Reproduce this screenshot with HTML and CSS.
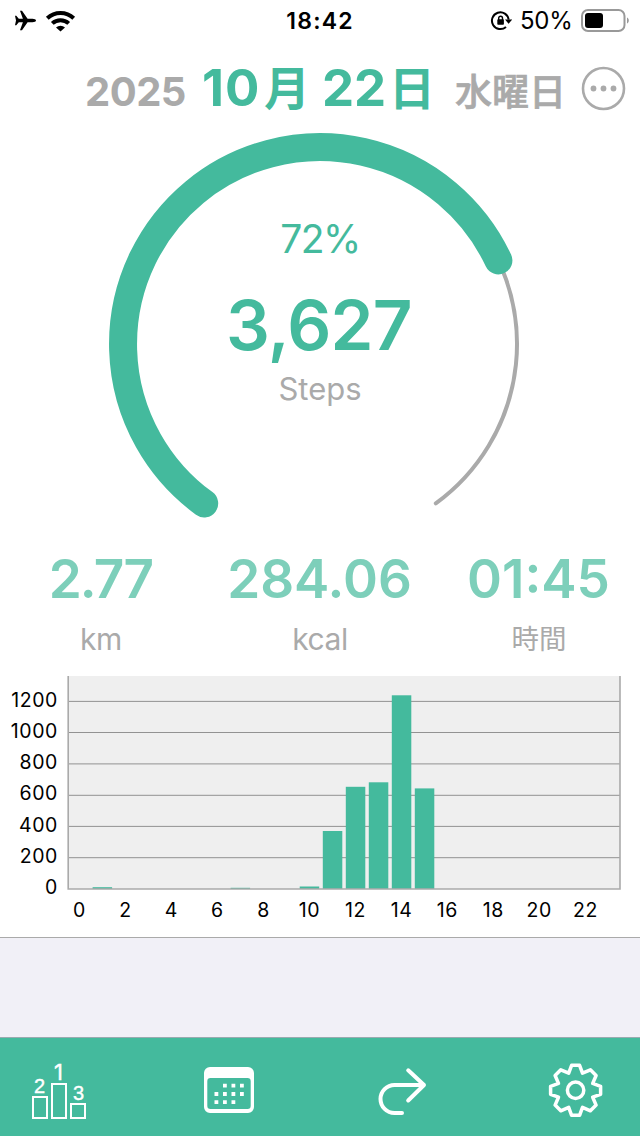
FILE: index.html
```html
<!DOCTYPE html>
<html lang="ja">
<head>
<meta charset="utf-8">
<title>Steps</title>
<link rel="stylesheet" href="styles.css">
</head>
<body>
<div class="app">
  <header class="status">
    <div class="status-left">
      <svg class="plane" viewBox="14 10 23 21" width="23" height="21"><path d="M36 20.500c0-1-1.600-1.700-3.500-1.700h-4.900l-5.600-8h-2l2.900 8h-4.100l-2.500-3H15l1 4.700-1 4.700h1.300l2.500-3h4.100l-2.900 8h2l5.600-8h4.900c1.900 0 3.500-.7 3.500-1.700z"/></svg>
      <svg class="wifi" viewBox="45 8 31 24" width="31" height="24"><path d="M60.500 30.500l-4.500-4a6.500 6.500 0 0 1 9 0z"/><path class="wifi-arc" d="M52.300 22.400a12 12 0 0 1 16.400 0M47.300 17.200a19.200 19.200 0 0 1 26.400 0"/></svg>
    </div>
    <div class="clock">18:42</div>
    <div class="status-right">
      <svg class="lock" viewBox="490 10 22 21" width="22" height="21"><path class="lock-ring" d="M506 26.900a8.400 8.400 0 1 1 2.700-7.200"/><path d="M505 19.500h7.200l-3.600 4.300z"/><rect x="497.300" y="19.300" width="6.600" height="5.500" rx=".8"/><path class="lock-bow" d="M498.700 20v-1.800a1.900 1.900 0 0 1 3.800 0V20"/></svg>
      <span class="percent">50%</span>
      <svg class="battery" viewBox="580 7 50 25" width="50" height="25"><rect class="case" x="582" y="9" width="42.500" height="21" rx="6"/><rect x="585" y="12" width="18" height="15" rx="3"/><path class="tip" d="M627 16.500c2.400.8 2.400 5.200 0 6z"/></svg>
    </div>
  </header>

  <div class="date">
    <span class="year">2025</span>
    <span class="day"><span class="num m">10</span><span class="kanji m-k">月</span><span class="num d">22</span><span class="kanji">日</span></span>
    <span class="weekday">水曜日</span>
    <svg class="more" viewBox="581 66 46 46" width="46" height="46"><circle class="more-ring" cx="603.500" cy="88.500" r="20.500"/><circle cx="593.500" cy="88.500" r="2.900"/><circle cx="603.500" cy="88.500" r="2.900"/><circle cx="613.500" cy="88.500" r="2.900"/></svg>
  </div>

  <section class="gauge">
    <svg class="ring" viewBox="100 120 440 410" width="440" height="410">
      <path class="ring-track" d="M204.200 503.400A197 197 0 1 1 435.800 503.400"/>
      <path class="ring-value" d="M204.200 503.400A197 197 0 1 1 498.400 260.400"/>
    </svg>
    <div class="gauge-text">
      <div class="goal">72%</div>
      <div class="steps">3,627</div>
      <div class="unit">Steps</div>
    </div>
  </section>

  <section class="stats">
    <div class="stat km"><b>2.77</b><span>km</span></div>
    <div class="stat kcal"><b>284.06</b><span>kcal</span></div>
    <div class="stat time"><b>01:45</b><span class="jp">時間</span></div>
  </section>

  <svg class="chart" viewBox="0 670 640 267" width="640" height="267">
    <rect class="plot" x="68" y="676" width="552" height="213"/>
    <path class="grid" d="M68 701.400H620M68 732.500H620M68 763.900H620M68 795.300H620M68 826.400H620M68 857.700H620"/>
    <g class="bars">
      <rect x="92.600" y="887.200" width="19.500" height="1.800"/><rect x="230.600" y="887.800" width="19.500" height="1.200"/><rect x="299.700" y="886.500" width="19.500" height="2.500"/>
      <rect x="322.800" y="831" width="19.500" height="58"/><rect x="345.800" y="786.800" width="19.500" height="102.200"/><rect x="368.800" y="782.300" width="19.500" height="106.700"/>
      <rect x="391.800" y="695.300" width="19.500" height="193.700"/><rect x="414.800" y="788.400" width="19.500" height="100.600"/>
    </g>
    <path class="frame" d="M68.200 676V889H620V676"/>
    <g class="ylab"><text x="58" y="707">1200</text><text x="58" y="738.200">1000</text><text x="58" y="769.300">800</text><text x="58" y="800.400">600</text><text x="58" y="832">400</text><text x="58" y="863">200</text><text x="58" y="894">0</text></g>
    <g class="xlab"><text x="79.500" y="917">0</text><text x="125.500" y="917">2</text><text x="171.300" y="917">4</text><text x="217.400" y="917">6</text><text x="263.500" y="917">8</text><text x="309.500" y="917">10</text><text x="355.500" y="917">12</text><text x="401.500" y="917">14</text><text x="447.300" y="917">16</text><text x="493.300" y="917">18</text><text x="539.300" y="917">20</text><text x="585.500" y="917">22</text></g>
  </svg>

  <div class="blank"></div>

  <nav class="tabs">
    <svg class="rank" viewBox="31 1060 56 60" width="56" height="60"><path class="blocks" d="M33 1097h14v21H33zM52 1084h14v34H52zM71 1104h14v14H71z"/><text x="39.500" y="1093">2</text><text class="first" x="58.500" y="1080">1</text><text x="78.500" y="1100">3</text></svg>
    <svg class="cal" viewBox="203 1060 52 60" width="52" height="60"><path fill-rule="evenodd" d="M210 1067h38a6 6 0 0 1 6 6v34a6 6 0 0 1-6 6h-38a6 6 0 0 1-6-6v-34a6 6 0 0 1 6-6zM210.500 1078a3.200 3.200 0 0 0-3.200 3.200v24.600a3.200 3.200 0 0 0 3.200 3.200h37a3.200 3.200 0 0 0 3.200-3.200v-24.600a3.200 3.200 0 0 0-3.200-3.200z"/><path class="dots" d="M223 1085.700h3.800M231.500 1085.700h3.800M240 1085.700h3.800M214.500 1094h3.800M223 1094h3.800M231.500 1094h3.800M240 1094h3.800M214.500 1102.200h3.800M223 1102.200h3.800M231.500 1102.200h3.800"/></svg>
    <svg class="share" viewBox="376 1060 52 60" width="52" height="60"><path d="M402 1113h-7.500a14 14 0 0 1 0-28H424M408.200 1070.300L424 1085l-15.800 15.500"/></svg>
    <svg class="gear" viewBox="547 1060 57 60" width="57" height="60"><g transform="translate(575.600 1090.300)"><path d="M-4-25H4L6.900-17.100 14.800-20.500 20.500-14.800 17.100-6.900 25-4V4L17.100 6.900 20.500 14.800 14.800 20.500 6.900 17.100 4 25H-4L-6.900 17.100-14.800 20.500-20.500 14.800-17.100 6.900-25 4V-4L-17.100-6.900-20.500-14.800-14.800-20.500-6.900-17.100z"/><circle r="8.200"/></g></svg>
  </nav>
</div>
</body>
</html>
```
FILE: styles.css
```css
* { box-sizing: border-box; }
body { margin: 0; background: #fff; font-family: Inter, "Noto Sans CJK JP", sans-serif; }
svg { display: block; flex: none; }
.app { width: 640px; height: 1136px; display: flex; flex-direction: column; overflow: hidden; white-space: nowrap; }

.status { height: 40px; display: grid; grid-template-columns: 1fr auto 1fr; align-items: center; line-height: 40px; }
.status-left { display: flex; align-items: center; padding-left: 14px; gap: 8px; }
.wifi-arc { fill: none; stroke: #000; stroke-width: 4; }
.clock { font-size: 23px; font-weight: 600; letter-spacing: 1.2px; padding-top: 1px; }
.status-right { display: flex; align-items: center; justify-content: flex-end; padding-right: 10px; }
.lock-ring { fill: none; stroke: #000; stroke-width: 2; }
.lock-bow { fill: none; stroke: #000; stroke-width: 1.4; }
.percent { width: 59px; margin-left: 8px; font-size: 24px; letter-spacing: -.3px; padding-top: 1px; }
.battery { margin-left: 1px; }
.case { fill: none; stroke: #999; stroke-width: 2; }
.tip { fill: #999; }

.date { height: 80px; display: flex; padding-left: 85px; line-height: 72px; font-weight: 700; color: #aaa; }
.year { width: 117px; font-size: 40px; letter-spacing: -.5px; padding-top: 16px; }
.day { width: 253px; display: flex; color: #44ba9d; }
.num { font-size: 51px; padding-top: 12px; }
.m { width: 62px; letter-spacing: 1px; }
.d { width: 67px; }
.kanji { font-size: 46px; padding-top: 12px; }
.m-k { width: 58px; }
.weekday { width: 126px; font-size: 37px; font-weight: 500; padding-top: 17px; -webkit-text-stroke: .7px #aaa; }
.more { margin-top: 26px; fill: #aaa; }
.more-ring { fill: none; stroke: #aaa; stroke-width: 2.6; }

.gauge { height: 410px; display: grid; justify-content: center; }
.ring, .gauge-text { grid-area: 1 / 1; }
.ring { fill: none; }
.ring-track { stroke: #aaa; stroke-width: 4; stroke-linecap: round; }
.ring-value { stroke: #44ba9d; stroke-width: 28; stroke-linecap: round; }
.gauge-text { text-align: center; color: #44ba9d; padding-top: 88px; }
.goal { font-size: 39px; line-height: 60px; letter-spacing: -1.6px; padding-top: 1px; }
.steps { font-size: 69px; font-weight: 600; line-height: 94px; letter-spacing: -.7px; padding: 9px 2px 0 0; }
.unit { font-size: 31px; line-height: 40px; margin-top: -3px; color: #aaa; }

.stats { height: 140px; display: grid; grid-template-columns: 202px 236px 202px; padding-top: 19px; }
.stat { display: flex; flex-direction: column; align-items: center; }
.stat b { font-size: 53px; font-weight: 600; line-height: 60px; padding-right: 1px; color: #7dcfba; }
.stat.km b { letter-spacing: -1.8px; }
.stat span { font-size: 30px; line-height: 40px; padding-top: 10px; letter-spacing: -.4px; color: #aaa; }
.stat .jp { font-size: 27.5px; letter-spacing: 0; }

.plot { fill: #efefef; }
.grid { fill: none; stroke: #929292; stroke-width: 1; }
.frame { fill: none; stroke: #aaa; stroke-width: 1.6; }
.bars { fill: #44ba9d; }
.ylab, .xlab { font-size: 19.5px; letter-spacing: .6px; fill: #000; }
.ylab { text-anchor: end; }
.xlab { text-anchor: middle; }

.blank { height: 100px; background: #f1f0f7; border-top: 1px solid #aaa; }
.tabs { height: 99px; display: flex; padding: 22px 0 0 31px; background: #44ba9d; border-top: 1px solid #9aaab0; fill: #fff; }
.rank text { font: 20px "Liberation Sans", sans-serif; text-anchor: middle; stroke: #fff; stroke-width: .4; }
.rank .first { font: 22px Inter, sans-serif; }
.blocks { fill: none; stroke: #fff; stroke-width: 2; }
.cal { margin-left: 116px; }
.dots { stroke: #fff; stroke-width: 3.8; }
.share { margin-left: 121px; fill: none; stroke: #fff; stroke-width: 4; stroke-linecap: round; stroke-linejoin: round; }
.gear { margin-left: 119px; fill: none; stroke: #fff; stroke-width: 3.5; stroke-linejoin: round; }
```
